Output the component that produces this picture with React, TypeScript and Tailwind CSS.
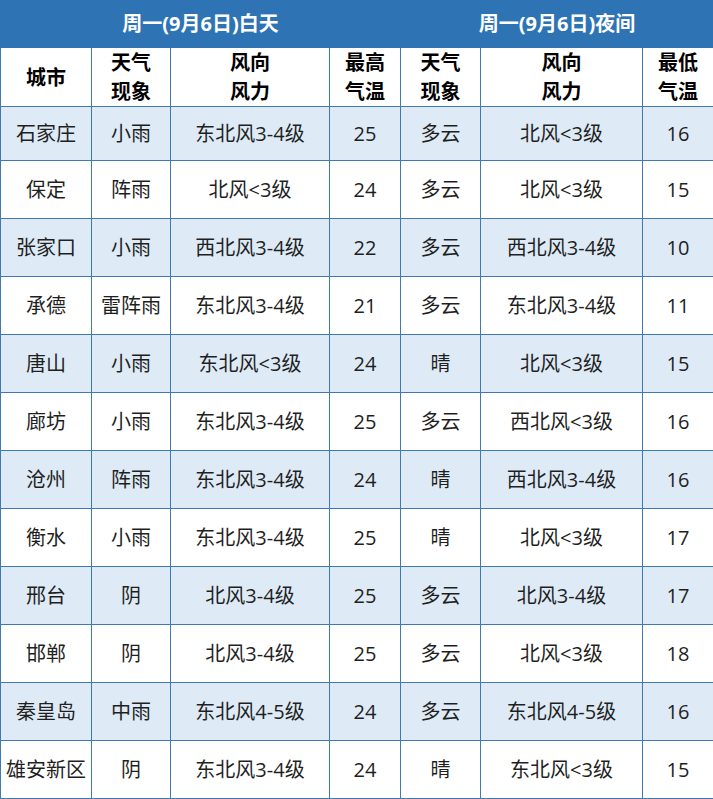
const rows = [
  ['石家庄', '小雨', '东北风3-4级', '25', '多云', '北风<3级', '16'],
  ['保定', '阵雨', '北风<3级', '24', '多云', '北风<3级', '15'],
  ['张家口', '小雨', '西北风3-4级', '22', '多云', '西北风3-4级', '10'],
  ['承德', '雷阵雨', '东北风3-4级', '21', '多云', '东北风3-4级', '11'],
  ['唐山', '小雨', '东北风<3级', '24', '晴', '北风<3级', '15'],
  ['廊坊', '小雨', '东北风3-4级', '25', '多云', '西北风<3级', '16'],
  ['沧州', '阵雨', '东北风3-4级', '24', '晴', '西北风3-4级', '16'],
  ['衡水', '小雨', '东北风3-4级', '25', '晴', '北风<3级', '17'],
  ['邢台', '阴', '北风3-4级', '25', '多云', '北风3-4级', '17'],
  ['邯郸', '阴', '北风3-4级', '25', '多云', '北风<3级', '18'],
  ['秦皇岛', '中雨', '东北风4-5级', '24', '多云', '东北风4-5级', '16'],
  ['雄安新区', '阴', '东北风3-4级', '24', '晴', '东北风<3级', '15'],
];

const heads = [
  ['城市'],
  ['天气', '现象'],
  ['风向', '风力'],
  ['最高', '气温'],
  ['天气', '现象'],
  ['风向', '风力'],
  ['最低', '气温'],
];

export default function App() {
  return (
    <div className="w-[713px] h-[799px] overflow-hidden bg-white font-['Open_Sans','Noto_Sans_CJK_SC',sans-serif]">
      <table className="w-[713px] table-fixed border-collapse text-[20px] text-[#1f1f1f]">
        <colgroup>
          <col className="w-[91px]" />
          <col className="w-[79px]" />
          <col className="w-[159px]" />
          <col className="w-[71px]" />
          <col className="w-[80px]" />
          <col className="w-[162px]" />
          <col className="w-[71px]" />
        </colgroup>
        <thead>
          <tr className="h-[47px] bg-[#2e74b5] text-white font-bold">
            <th colSpan={4} className="border border-[#2e74b5] font-bold">周一(9月6日)白天</th>
            <th colSpan={3} className="border border-[#2e74b5] font-bold">周一(9月6日)夜间</th>
          </tr>
          <tr className="h-[57px] bg-white text-black">
            {heads.map((h, i) => (
              <th key={i} className="border border-[#3d79b3] font-bold leading-[29px] p-0">
                {h.map((t, j) => (
                  <div key={j}>{t}</div>
                ))}
              </th>
            ))}
          </tr>
        </thead>
        <tbody>
          {rows.map((r, i) => (
            <tr key={i} className={`${i === 0 ? 'h-[54px]' : 'h-[58px]'} ${i % 2 === 0 ? 'bg-[#deebf7]' : 'bg-white'}`}>
              {r.map((c, j) => (
                <td key={j} className="border border-[#3d79b3] text-center whitespace-nowrap px-0">
                  {c}
                </td>
              ))}
            </tr>
          ))}
        </tbody>
      </table>
    </div>
  );
}
